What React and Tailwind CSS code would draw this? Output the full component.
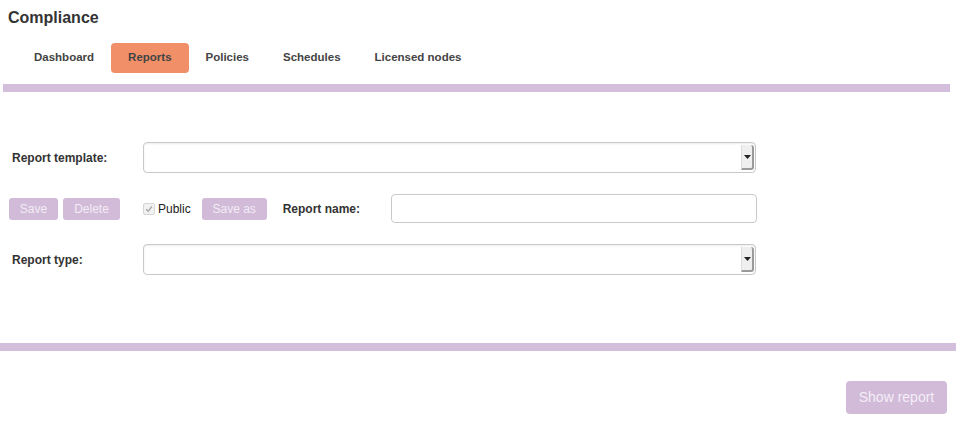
import React from "react";

const tabs = ["Dashboard", "Reports", "Policies", "Schedules", "Licensed nodes"];

function SelectBox() {
  return (
    <div className="flex h-[31px] w-[613px] rounded-[4px] border border-[#c9c9c9] bg-white shadow-[inset_0_1px_2px_rgba(0,0,0,0.08)]">
      <div className="flex-1" />
      <div className="my-[2px] mr-[1px] flex w-[13px] items-center justify-center rounded-r-[3px] border-r-2 border-b-2 border-l border-[#9a9a9a] border-l-[#dcdcdc] bg-[#efefef]">
        <svg width="7" height="4" viewBox="0 0 7 4">
          <path d="M0 0h7L3.5 4z" fill="#222" />
        </svg>
      </div>
    </div>
  );
}

function PurpleButton({ children, className }) {
  return (
    <button
      className={
        "rounded-[3px] bg-[#d1bbd9] text-[12px] leading-none text-[#f3ecf5] " +
        className
      }
    >
      {children}
    </button>
  );
}

export default function App() {
  return (
    <div
      className="w-[961px] h-[429px] bg-white text-[#333]"
      style={{ fontFamily: '"Liberation Sans", Arial, sans-serif' }}
    >
      <h1 className="pl-[8px] pt-[9px] text-[16px] font-bold leading-[18px] text-[#333]">
        Compliance
      </h1>

      <div className="mt-[16px] flex pl-[17px]">
        {tabs.map((t) => (
          <div
            key={t}
            className={
              "flex h-[30px] items-center rounded-[4px] px-[17px] text-[11.5px] font-bold text-[#444] " +
              (t === "Reports" ? "bg-[#f19068]" : "")
            }
          >
            {t}
          </div>
        ))}
      </div>

      <div className="ml-[3px] mt-[11px] h-[8px] w-[947px] bg-[#d3bedb]" />

      <div className="mt-[50px] flex flex-col">
        <div className="flex items-center">
          <label className="w-[143px] pl-[12px] text-[12px] font-bold">
            Report template:
          </label>
          <SelectBox />
        </div>

        <div className="mt-[21px] flex h-[29px] items-center">
          <PurpleButton className="ml-[9px] h-[22px] w-[49px]">Save</PurpleButton>
          <PurpleButton className="ml-[5px] h-[22px] w-[57px]">Delete</PurpleButton>
          <div className="ml-[23px] flex items-center">
            <div className="flex h-[12px] w-[12px] items-center justify-center rounded-[2px] border border-[#d6d6d6] bg-[#f2f2f2]">
              <svg width="8" height="8" viewBox="0 0 8 8">
                <path
                  d="M1.2 4.3 3.2 6.3 6.8 1.5"
                  fill="none"
                  stroke="#a6a6a6"
                  strokeWidth="1.4"
                />
              </svg>
            </div>
            <span className="ml-[3px] text-[12px] text-[#222]">Public</span>
          </div>
          <PurpleButton className="ml-[11px] h-[22px] w-[65px]">Save as</PurpleButton>
          <label className="ml-[16px] w-[108px] text-[12px] font-bold">
            Report name:
          </label>
          <input
            className="h-[29px] w-[366px] rounded-[4px] border border-[#c9c9c9] bg-white outline-none"
            type="text"
          />
        </div>

        <div className="mt-[21px] flex items-center">
          <label className="w-[143px] pl-[12px] text-[12px] font-bold">
            Report type:
          </label>
          <SelectBox />
        </div>
      </div>

      <div className="mt-[68px] h-[8px] w-[956px] bg-[#d3bedb]" />

      <div className="mt-[30px] flex justify-end pr-[14px]">
        <button className="h-[33px] w-[101px] rounded-[4px] bg-[#d1bbd9] text-[14px] text-[#f5eef7]">
          Show report
        </button>
      </div>
    </div>
  );
}
